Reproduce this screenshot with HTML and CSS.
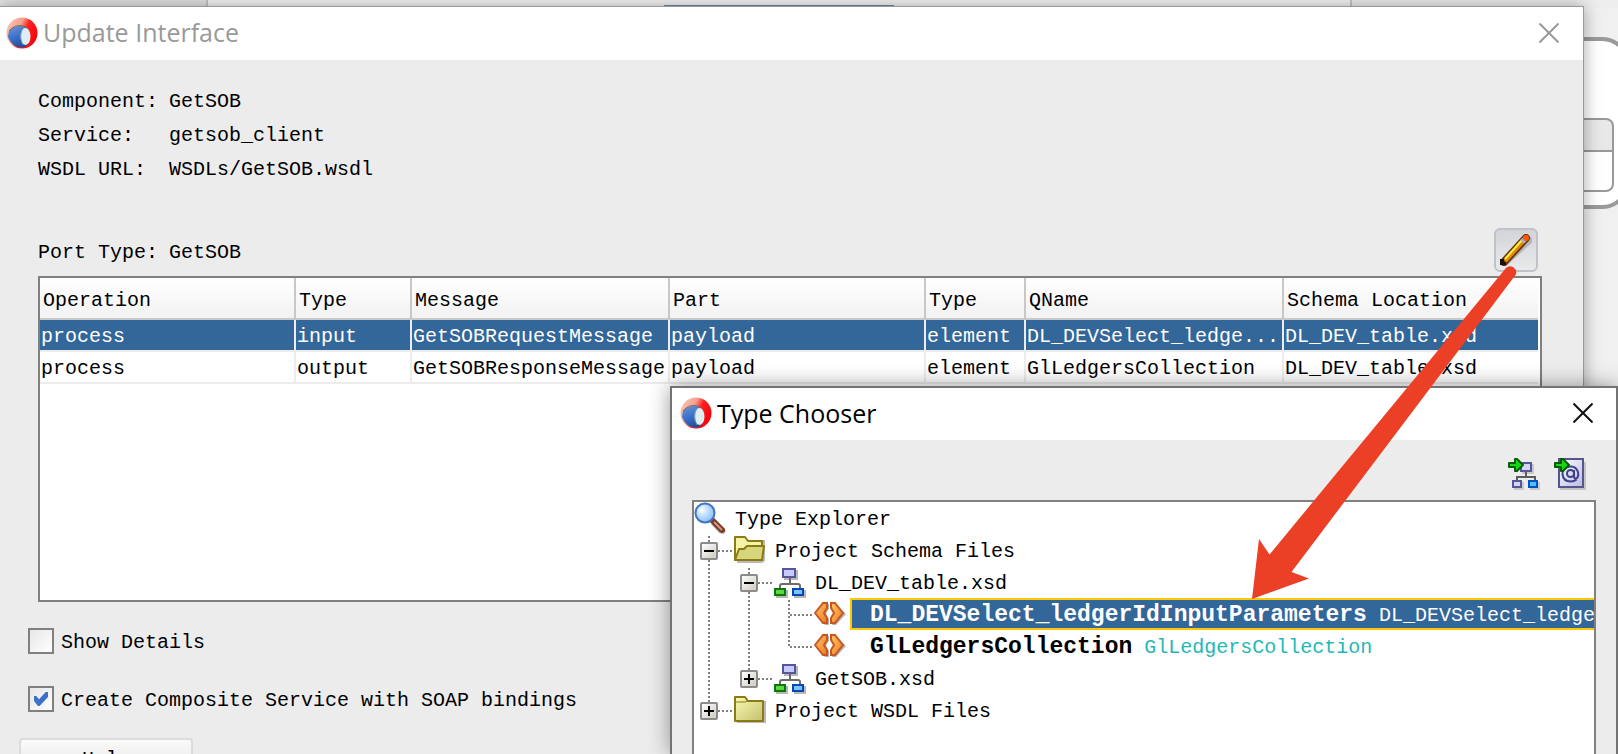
FILE: index.html
```html
<!DOCTYPE html>
<html lang="en">
<head>
<meta charset="utf-8">
<title>Update Interface</title>
<link rel="stylesheet" href="styles.css">
</head>
<body>
<svg class="defs" aria-hidden="true">
  <defs>
    <linearGradient id="gRed" x1="0" y1="0" x2="1" y2="0.5"><stop offset="0.1" stop-color="#f3c4b4"/><stop offset="0.45" stop-color="#f7a08c"/><stop offset="0.65" stop-color="#ff2020"/><stop offset="1" stop-color="#f5060c"/></linearGradient>
    <linearGradient id="gBlue" x1="0.2" y1="0" x2="0.6" y2="1"><stop offset="0" stop-color="#6f90c8"/><stop offset="0.45" stop-color="#3a74d0"/><stop offset="1" stop-color="#234a94"/></linearGradient>
    <linearGradient id="gFolder" x1="0" y1="0" x2="1" y2="1"><stop offset="0" stop-color="#fbfbb8"/><stop offset="1" stop-color="#c3bf6a"/></linearGradient>
    <linearGradient id="gOrange" x1="0" y1="0" x2="1" y2="1"><stop offset="0" stop-color="#ffc56a"/><stop offset="1" stop-color="#f07a28"/></linearGradient>
    <radialGradient id="gLens" cx="0.35" cy="0.35" r="0.7"><stop offset="0" stop-color="#ffffff"/><stop offset="0.4" stop-color="#c4e2ff"/><stop offset="1" stop-color="#8fbdf6"/></radialGradient>
    <linearGradient id="gPage" x1="0" y1="0" x2="1" y2="1"><stop offset="0" stop-color="#ffffff"/><stop offset="1" stop-color="#b9b9e4"/></linearGradient>
    <symbol id="logo" viewBox="0 0 32 32">
      <circle cx="16" cy="16" r="15.5" fill="url(#gRed)"/>
      <path d="M2 20Q2 12 9 10Q19 7 23 14Q26 24 19 30Q8 33 2 20Z" fill="url(#gBlue)"/>
      <path d="M3 14Q9 7 17 9Q21 10 23 14" fill="none" stroke="#6b6670" stroke-width="1"/>
      <ellipse cx="19.500" cy="19.500" rx="5" ry="8.500" fill="#dceff5"/>
      <path d="M16 13Q13 20 17 28" fill="none" stroke="#8296a8" stroke-width="1"/>
    </symbol>
    <symbol id="schema" viewBox="0 0 32 32">
      <path d="M10 4h14v10H10zM2 24h12v8H2zM20 24h12v8H20z" fill="#b8b8b8"/>
      <path d="M16 12v6M6 23v-3q0-2 2-2h16q2 0 2 2v3" fill="none" stroke="#6c6c6c" stroke-width="2"/>
      <path d="M9 3h12v8H9z" fill="#c9c9ff" stroke="#56569a" stroke-width="2"/>
      <path d="M1 23h10v6H1z" fill="#5fd83a" stroke="#087808" stroke-width="2"/>
      <path d="M19 23h10v6H19z" fill="#7cc4ff" stroke="#0648b8" stroke-width="2"/>
    </symbol>
    <symbol id="element" viewBox="0 0 32 32">
      <path d="M11 6h4v5l-3 5 3 5v6h-4L3 17zM21 6h-3v5l3 5-3 5v6h4l10-11z" fill="#b5b5b5"/>
      <path d="M9 5h4v5l-3 5 3 5v5H9L1 15z" fill="url(#gOrange)" stroke="#c4581f" stroke-width="2"/>
      <path d="M21 5h-4v5l3 5-3 5v5h4l8-10z" fill="url(#gOrange)" stroke="#c4581f" stroke-width="2"/>
    </symbol>
    <symbol id="arrow-in" viewBox="0 0 16 14">
      <path d="M1 5h6V1h2l6 6-6 6H7V9H1z" fill="#14d814" stroke="#055c05" stroke-width="2" stroke-linejoin="round"/>
    </symbol>
  </defs>
</svg>

<div class="desktop">
  <div class="editor-strip"><span class="strip-nav"></span><span class="strip-canvas"><span class="strip-tab"></span></span><span class="strip-side"></span></div>
  <div class="composite-node"><div class="composite-port"></div></div>

  <section class="window update-window" aria-label="Update Interface">
    <header class="titlebar">
      <svg class="logo"><use href="#logo"/></svg>
      <h1 class="title">Update Interface</h1>
      <button class="close" aria-label="Close"><svg viewBox="0 0 20 20"><path d="M0.500 0.500l19 19M19.500 0.500l-19 19"/></svg></button>
    </header>
    <div class="update-body">
      <dl class="facts">
        <dt>Component:</dt><dd>GetSOB</dd>
        <dt>Service:</dt><dd>getsob_client</dd>
        <dt>WSDL URL:</dt><dd>WSDLs/GetSOB.wsdl</dd>
      </dl>
      <div class="port-row">
        <span class="port-label">Port Type:</span><span class="port-value">GetSOB</span>
        <button class="edit" aria-label="Edit type">
          <svg viewBox="0 0 32 32">
            <path d="M5 30L31 6" stroke="#b4b6ba" stroke-width="5" stroke-linecap="round"/>
            <path d="M4 28L26 4" stroke="#6b3606" stroke-width="8" stroke-linecap="round"/>
            <path d="M5 27L24 6" stroke="#e28a00" stroke-width="4.500"/>
            <path d="M5 25L22 6" stroke="#fff04a" stroke-width="2"/>
            <path d="M22 8l3-3" stroke="#a9b2bf" stroke-width="5"/>
            <circle cx="26" cy="4" r="3" fill="#ff5a0a"/>
            <path d="M0 25h4v3h2v3H0z" fill="#16120c"/>
          </svg>
        </button>
      </div>
      <div class="table-frame">
        <table class="ports">
          <colgroup><col class="c-op"><col class="c-dir"><col class="c-msg"><col class="c-part"><col class="c-kind"><col class="c-qname"><col></colgroup>
          <thead><tr><th>Operation</th><th>Type</th><th>Message</th><th>Part</th><th>Type</th><th>QName</th><th>Schema Location</th></tr></thead>
          <tbody>
            <tr class="selected"><td>process</td><td>input</td><td>GetSOBRequestMessage</td><td>payload</td><td>element</td><td>DL_DEVSelect_ledge...</td><td>DL_DEV_table.xsd</td></tr>
            <tr><td>process</td><td>output</td><td>GetSOBResponseMessage</td><td>payload</td><td>element</td><td>GlLedgersCollection</td><td>DL_DEV_table.xsd</td></tr>
          </tbody>
        </table>
      </div>
      <div class="options">
        <label class="option"><input type="checkbox"><span class="option-text">Show Details</span></label>
        <label class="option"><input type="checkbox" checked><span class="option-text">Create Composite Service with SOAP bindings</span></label>
        <button class="help">Help</button>
      </div>
    </div>
  </section>

  <section class="window chooser-window" aria-label="Type Chooser">
    <header class="titlebar">
      <svg class="logo"><use href="#logo"/></svg>
      <h2 class="title">Type Chooser</h2>
      <button class="close" aria-label="Close"><svg viewBox="0 0 20 20"><path d="M0.500 0.500l19 19M19.500 0.500l-19 19"/></svg></button>
    </header>
    <div class="chooser-body">
      <div class="toolbar">
        <button class="tool" aria-label="Import schema file">
          <svg viewBox="0 0 32 32">
            <path d="M14 6h12v10H14zM6 24h10v8H6zM22 24h10v8H22z" fill="#c9c9c9"/>
            <path d="M18 14v6M9 23v-4h18v4" fill="none" stroke="#5c5c5c" stroke-width="2"/>
            <path d="M13 5h10v8H13z" fill="#d4d4f6" stroke="#56569a" stroke-width="2"/>
            <path d="M5 23h8v6H5z" fill="#d4d4f6" stroke="#56569a" stroke-width="2"/>
            <path d="M21 23h8v6h-8z" fill="#4fc0ff" stroke="#0054bc" stroke-width="2"/>
            <use href="#arrow-in" width="16" height="14"/>
          </svg>
        </button>
        <button class="tool" aria-label="Import WSDL">
          <svg viewBox="0 0 32 32">
            <path d="M6 4h26v28H6z" fill="#c4c4c4"/>
            <path d="M5 1h24v28H5z" fill="url(#gPage)" stroke="#56568c" stroke-width="2"/>
            <path d="M20 12v6q0 3 2 2.500q3-1 2-6.500q-2-6-8-5.500q-8 1-7.500 8q1 7 8 7q4 0 6-2" fill="none" stroke="#3f3f8c" stroke-width="2"/>
            <circle cx="16.500" cy="15.500" r="3.500" fill="none" stroke="#3f3f8c" stroke-width="2"/>
            <use href="#arrow-in" width="16" height="14"/>
          </svg>
        </button>
      </div>
      <div class="tree" role="tree" aria-label="Types">
        <div class="node" role="treeitem">
          <svg class="icon" viewBox="0 0 32 32">
            <path d="M20 19l12 10-2 3-5-1-8-9z" fill="#b7b7b7"/>
            <path d="M19 19l9 9" stroke="#7a3a22" stroke-width="6" stroke-linecap="round"/>
            <path d="M20 20l8 8" stroke="#d29c84" stroke-width="2"/>
            <circle cx="11" cy="11" r="9.500" fill="url(#gLens)" stroke="#3f76c4" stroke-width="2"/>
          </svg>
          <span class="name">Type Explorer</span>
        </div>
        <div class="node" role="treeitem">
          <span class="guide line branch"><button class="handle" aria-label="Collapse"></button></span>
          <svg class="icon" viewBox="0 0 32 32">
            <path d="M3 6h28v21l-3 2H3z" fill="#b9b9b9"/>
            <path d="M1 26V3h10l3 4h14v19z" fill="#f4f4a4" stroke="#8c7a14" stroke-width="2" stroke-linejoin="round"/>
            <path d="M1 26l4-11h5l3-3h17l-2 14z" fill="#d8d67c" stroke="#8c7a14" stroke-width="2" stroke-linejoin="round"/>
          </svg>
          <span class="name">Project Schema Files</span>
        </div>
        <div class="node" role="treeitem">
          <span class="guide line"></span><span class="guide line branch"><button class="handle" aria-label="Collapse"></button></span>
          <svg class="icon"><use href="#schema"/></svg>
          <span class="name">DL_DEV_table.xsd</span>
        </div>
        <div class="node" role="treeitem" aria-selected="true">
          <span class="guide line"></span><span class="guide line"></span><span class="guide line branch"></span>
          <svg class="icon"><use href="#element"/></svg>
          <span class="entry chosen"><strong>DL_DEVSelect_ledgerIdInputParameters</strong> <span class="qname">DL_DEVSelect_ledgerIdInputParameters</span></span>
        </div>
        <div class="node" role="treeitem">
          <span class="guide line"></span><span class="guide line"></span><span class="guide end branch"></span>
          <svg class="icon"><use href="#element"/></svg>
          <span class="entry"><strong>GlLedgersCollection</strong> <span class="qname">GlLedgersCollection</span></span>
        </div>
        <div class="node" role="treeitem">
          <span class="guide line"></span><span class="guide end branch"><button class="handle closed" aria-label="Expand"></button></span>
          <svg class="icon"><use href="#schema"/></svg>
          <span class="name">GetSOB.xsd</span>
        </div>
        <div class="node" role="treeitem">
          <span class="guide end branch"><button class="handle closed" aria-label="Expand"></button></span>
          <svg class="icon" viewBox="0 0 32 32">
            <path d="M3 7h29v22H3z" fill="#b9b9b9"/>
            <path d="M1 27V3h10l3 4h15v20z" fill="url(#gFolder)" stroke="#8c7a14" stroke-width="2" stroke-linejoin="round"/>
            <path d="M2 8h9l3-1" fill="none" stroke="#8c7a14" stroke-width="1"/>
          </svg>
          <span class="name">Project WSDL Files</span>
        </div>
      </div>
    </div>
  </section>

  <svg class="pointer" viewBox="0 0 280 340" aria-hidden="true">
    <path d="M275.500 15L51.500 312L69 318.500L12 339L19 279L29.500 294.500L266 8A6 6 0 0 1 275.500 15Z" fill="#ec4026"/>
  </svg>
</div>
</body>
</html>
```

FILE: styles.css
```css
* { box-sizing: border-box; }

body {
  margin: 0;
  font: 20px/24px "Liberation Mono", monospace;
  color: #000;
}

button { padding: 0; border: 0; background: none; font: inherit; color: inherit; }
svg { display: block; flex: none; }
.defs { position: absolute; width: 0; height: 0; }

.desktop {
  position: relative;
  height: 100vh;
  overflow: hidden;
  background: #f0f0f0;
}

/* Editor behind the dialogs */
.editor-strip { display: flex; height: 8px; }
.strip-nav { width: 208px; background: #e4e4e4; border-right: 2px solid #c8c8c8; }
.strip-canvas { flex: 1; background: #f6f6f6; }
.strip-tab { display: block; width: 230px; height: 8px; margin-left: 456px; border-bottom: 3px solid #6f8ba8; }
.strip-side { width: 268px; border-left: 2px solid #c8c8c8; background: #eee; }

.composite-node {
  position: absolute;
  top: 37px;
  right: -12px;
  width: 200px;
  height: 172px;
  padding: 77px 12px 0 0;
  border: 4px solid #9a9a9a;
  border-radius: 28px;
  background: #fff;
}
.composite-port {
  height: 74px;
  border: 2px solid #999;
  border-radius: 8px;
  background: linear-gradient(#e8e8e8 30px, #999 30px, #999 32px, #fff 32px);
}

/* Window chrome */
.window {
  position: absolute;
  display: flex;
  flex-direction: column;
  background: #ececec;
}
.update-window {
  top: 6px;
  left: 0;
  right: 34px;
  bottom: 0;
  border-top: 1px solid #999;
  border-right: 1px solid #999;
  box-shadow: 0 0 16px rgba(0, 0, 0, 0.35);
}
.chooser-window {
  top: 386px;
  left: 670px;
  right: 0;
  bottom: 0;
  border: 2px solid #737373;
  border-bottom: 0;
  box-shadow: 0 0 20px rgba(0, 0, 0, 0.4);
}
.titlebar {
  display: flex;
  align-items: center;
  height: 53px;
  flex: none;
  padding: 0 24px 2px 6px;
  background: #fff;
}
.chooser-window .titlebar { height: 52px; padding: 0 23px 2px 8px; }
.logo { width: 32px; height: 32px; }
.title {
  flex: 1;
  margin: 0 0 0 5px;
  padding-bottom: 1px;
  font: 400 25px/32px "Open Sans", sans-serif;
}
.update-window .title { color: #999; }
.close { width: 20px; height: 20px; }
.close svg { width: 20px; height: 20px; fill: none; stroke: #111; stroke-width: 2; }
.update-window .close svg { stroke: #999; }

/* Update Interface */
.update-body { padding: 25px 41px 0 38px; }
.facts {
  display: grid;
  grid-template-columns: 131px 1fr;
  line-height: 34px;
  margin: 0 0 41px;
}
.facts dd { margin: 0; }
.port-row { display: flex; align-items: center; height: 44px; margin-bottom: 4px; padding-right: 4px; }
.port-label { width: 131px; padding-top: 6px; }
.port-value { flex: 1; padding-top: 6px; }
.edit {
  display: grid;
  place-items: center;
  width: 44px;
  height: 44px;
  border: 2px solid #bfc2c8;
  border-radius: 6px;
  background: linear-gradient(#d2d4d8, #e9eaec);
}
.edit svg { width: 32px; height: 32px; fill: none; }

.table-frame {
  height: 326px;
  padding-right: 2px;
  border: 2px solid #808080;
  background: #fff;
}
.ports { width: 100%; table-layout: fixed; border-collapse: separate; border-spacing: 0; }
.c-op, .c-part { width: 256px; }
.c-dir { width: 116px; }
.c-msg, .c-qname { width: 258px; }
.c-kind { width: 100px; }
.ports th, .ports td {
  padding: 4px 0 0 1px;
  border-right: 2px solid #ececec;
  border-bottom: 2px solid #ececec;
  text-align: left;
  font-weight: 400;
  white-space: nowrap;
  overflow: hidden;
}
.ports th {
  height: 42px;
  padding: 6px 0 0 3px;
  border-color: #c8c8c8;
  background: linear-gradient(#fff, #f2f2f2);
}
.ports td { height: 32px; }
.ports th:last-child, .ports td:last-child { border-right: 0; }
.selected { background: #336699; color: #fff; }

.options {
  display: flex;
  flex-direction: column;
  align-items: flex-start;
  margin: 26px 0 0 -10px;
}
.option { display: flex; align-items: center; gap: 7px; height: 26px; margin-bottom: 32px; }
.option + .option { margin-bottom: 26px; }
.option-text { padding-top: 4px; }
.option input {
  appearance: none;
  display: grid;
  place-items: center;
  width: 26px;
  height: 26px;
  margin: 0;
  border: 2px solid #808080;
  background: linear-gradient(135deg, #e6e6e6, #fff);
}
.option input:checked::before {
  content: "";
  width: 14px;
  height: 14px;
  background: #3b73c8;
  clip-path: polygon(0 28%, 16% 28%, 36% 52%, 84% 0, 100% 0, 100% 36%, 40% 100%, 28% 100%, 0 64%);
}
.help {
  width: 174px;
  height: 44px;
  margin-left: -9px;
  border: 2px solid #dcdcdc;
  border-radius: 4px;
  background: linear-gradient(#fafafa, #e2e2e2);
}

/* Type Chooser */
.chooser-body {
  display: flex;
  flex-direction: column;
  flex: 1;
  min-height: 0;
  padding: 18px 20px 0;
}
.toolbar { display: flex; justify-content: flex-end; gap: 14px; margin-bottom: 10px; padding-right: 10px; }
.tool, .tool svg { width: 32px; height: 32px; }
.tree {
  flex: 1;
  min-height: 0;
  overflow: hidden;
  border: 2px solid #808080;
  border-bottom: 0;
  background: #fff;
}
.node { display: flex; align-items: center; height: 32px; white-space: nowrap; }
.icon { width: 32px; height: 32px; }
.name { margin-left: 9px; padding-top: 3px; }
.entry {
  flex: 1;
  height: 32px;
  margin-left: 4px;
  padding-left: 18px;
  border: 2px solid transparent;
  border-right: 0;
  line-height: 30px;
  overflow: hidden;
}
.entry strong { font-size: 23px; }
.qname { color: #1fb8b8; }
.chosen { border-color: #ffc800; background: #336699; color: #fff; }
.chosen .qname { color: #fff; }

.guide {
  --dots: #fff 0 2px, #808080 2px 4px;
  flex: none;
  width: 40px;
  height: 32px;
  padding: 8px 0 0 6px;
  background-repeat: no-repeat;
  background-position: 14px 0, 14px 16px;
}
.line { background-image: repeating-linear-gradient(180deg, var(--dots)); background-size: 2px 32px; }
.line.branch, .end.branch {
  background-image: repeating-linear-gradient(180deg, var(--dots)), repeating-linear-gradient(90deg, var(--dots));
}
.line.branch { background-size: 2px 32px, 24px 2px; }
.end.branch { background-size: 2px 18px, 24px 2px; }
.handle {
  display: block;
  width: 18px;
  height: 18px;
  border: 2px solid #8c8c8c;
  border-radius: 2px;
  background:
    linear-gradient(#000, #000) center / 10px 2px no-repeat,
    linear-gradient(135deg, #fff, #cfcac0);
}
.handle.closed {
  background:
    linear-gradient(#000, #000) center / 10px 2px no-repeat,
    linear-gradient(#000, #000) center / 2px 10px no-repeat,
    linear-gradient(135deg, #fff, #cfcac0);
}

/* Arrow from the edit button to the chosen type */
.pointer { position: absolute; top: 260px; left: 1240px; width: 280px; height: 340px; }
```
